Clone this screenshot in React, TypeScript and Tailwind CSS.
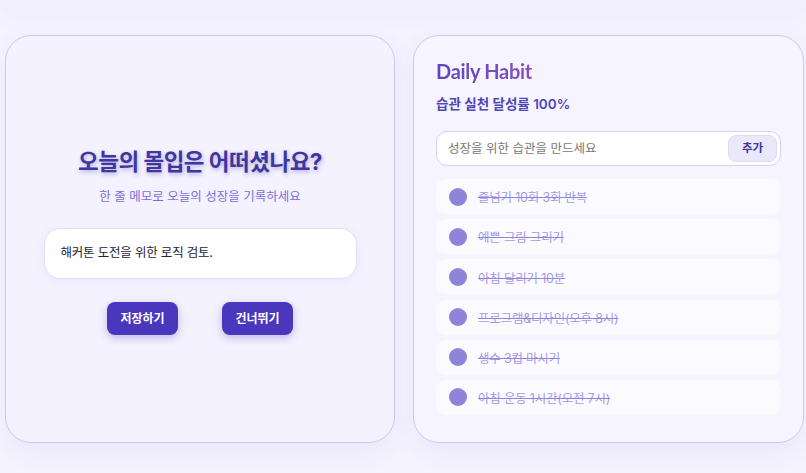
const habits = [
  "줄넘기 10회 3회 반복",
  "예쁜 그림 그리기",
  "아침 달리기 10분",
  "프로그램&디자인(오후 8시)",
  "생수 3컵 마시기",
  "아침 운동 1시간(오전 7시)",
];

const kr = "font-['Inter','Noto_Sans_CJK_KR',sans-serif]";

export default function App() {
  return (
    <div className={`${kr} h-[473px] w-[806px] overflow-hidden bg-[#f5f3ff]`}>
      <div className="h-[10px] w-full bg-[#f1effd] shadow-[0_4px_20px_rgba(99,80,220,0.07)]" />
      <div className="flex gap-[18px] pl-[5px] pt-[25px]">
        <section className="flex h-[408px] w-[390px] flex-col items-center rounded-[26px] border border-[#cfc8f5] bg-[#f4f2ff] pt-[110px] shadow-[0_8px_24px_rgba(99,80,220,0.08)]">
          <h1 className="text-[22.5px] leading-[32px] font-bold tracking-[-0.5px] text-[#3f36a0] [text-shadow:1px_2px_4px_rgba(63,54,160,0.35)]">
            오늘의 몰입은 어떠셨나요?
          </h1>
          <p className="mt-[9px] text-[12.5px] leading-[20px] text-[#7a6fdb]">한 줄 메모로 오늘의 성장을 기록하세요</p>
          <div className="mt-[21px] flex h-[51px] w-[313px] items-center rounded-[16px] border border-[#e2def8] bg-white px-[16px] text-[12.5px] tracking-[-0.2px] text-[#26243a] shadow-[0_2px_8px_rgba(99,80,220,0.08)]">
            해커톤 도전을 위한 로직 검토.
          </div>
          <div className="mt-[23px] flex gap-[44px]">
            <button className="h-[33px] w-[71px] rounded-[8px] bg-[#4a37bd] text-[12px] font-bold text-white shadow-[0_3px_8px_rgba(74,55,189,0.3)]">저장하기</button>
            <button className="h-[33px] w-[71px] rounded-[8px] bg-[#4a37bd] text-[12px] font-bold text-white shadow-[0_3px_8px_rgba(74,55,189,0.3)]">건너뛰기</button>
          </div>
        </section>
        <section className="flex h-[408px] w-[391px] flex-col rounded-[26px] border border-[#cfc8f5] bg-[#f6f4ff] px-[22px] pt-[21px] shadow-[0_8px_24px_rgba(99,80,220,0.08)]">
          <h2 className="w-fit bg-gradient-to-r from-[#5b45c0] to-[#8a50b8] bg-clip-text font-['Lato','Inter',sans-serif] text-[20px] leading-[28px] font-bold tracking-[-0.3px] text-transparent">
            Daily Habit
          </h2>
          <p className="mt-[9px] text-[13.5px] leading-[20px] font-semibold text-[#4f45b5]">습관 실천 달성률 100%</p>
          <div className="mt-[17px] flex h-[35px] items-center justify-between rounded-[11px] border border-[#d6d1f5] bg-white pr-[3px] pl-[11px]">
            <span className="pt-[1px] text-[12.5px] text-[#777]">성장을 위한 습관을 만드세요</span>
            <button className="h-[27px] w-[49px] rounded-[8px] border border-[#dcdcf5] bg-[#e9e9fb] text-[11.5px] font-bold text-[#3f36a0]">추가</button>
          </div>
          <ul className="mt-[13px] flex flex-col gap-[5.2px]">
            {habits.map((h) => (
              <li key={h} className="flex h-[35px] items-center gap-[11px] rounded-[10px] bg-[#fbfaff] pl-[13px]">
                <span className="h-[18px] w-[18px] rounded-full bg-[#8f84da]" />
                <span className="pt-[4px] text-[12.5px] tracking-[-0.2px] text-[#a59be4] line-through decoration-[#8f84da]">{h}</span>
              </li>
            ))}
          </ul>
        </section>
      </div>
    </div>
  );
}
